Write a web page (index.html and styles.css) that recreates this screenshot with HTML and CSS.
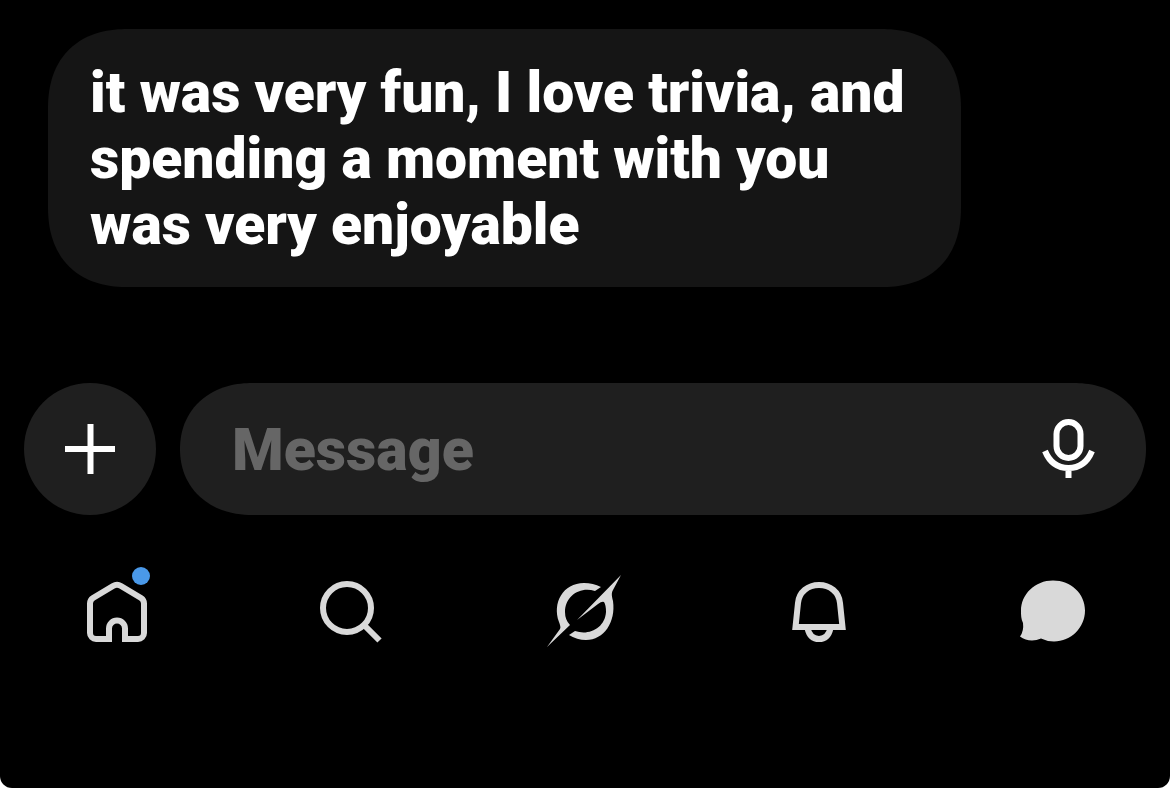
FILE: index.html
```html
<!DOCTYPE html>
<html lang="en">
<head>
<meta charset="utf-8">
<meta name="viewport" content="width=device-width, initial-scale=1">
<title>Messages</title>
<link rel="stylesheet" href="styles.css">
</head>
<body>
<div class="screen">
  <main class="thread">
    <p class="bubble">it was very fun, I love trivia, and spending a moment with you was very enjoyable</p>
  </main>
  <form class="composer">
    <button class="add" type="button" aria-label="Add attachment">
      <svg viewBox="0 0 52 52" width="52" height="52" fill="none" stroke="#fff" stroke-width="6"><path d="M26.500 1v50M1 26h50"/></svg>
    </button>
    <div class="field">
      <input class="field-input" type="text" placeholder="Message" aria-label="Message">
      <button class="mic" type="button" aria-label="Record voice message">
        <svg viewBox="0 0 60 64" width="60" height="64" fill="none" stroke="#fff" stroke-width="6"><rect x="18.500" y="5" width="24" height="36" rx="12"/><path d="M7 34C11.500 45 20 51 30.500 51S49.500 45 54 34M30.500 51v10"/></svg>
      </button>
    </div>
  </form>
  <nav class="tabs" aria-label="Main">
    <a class="tab" href="#home" aria-label="Home">
      <span class="icon">
        <svg viewBox="77 572 80 80" width="80" height="80" fill="none" stroke="#d9d9d9" stroke-width="6"><path d="M109 642V628.500a8 8 0 0 1 16 0V639H138a6 6 0 0 0 6-6V603.500Q144 600 141 598L121 586Q117 583.500 113 586L93 598Q90 600 90 603.500V633a6 6 0 0 0 6 6H112"/></svg>
        <span class="badge"></span>
      </span>
    </a>
    <a class="tab" href="#search" aria-label="Search">
      <svg viewBox="311 572 80 80" width="80" height="80" fill="none" stroke="#d9d9d9" stroke-width="6"><circle cx="347" cy="608" r="24"/><path d="M364 625l15.500 15.500"/></svg>
    </a>
    <a class="tab" href="#grok" aria-label="Grok">
      <svg viewBox="545 572 80 80" width="80" height="80" fill="#d9d9d9"><path d="M547 647L560 629C561 627 560 625 559 622C552 603 563 583 584 583Q593 583 601 587L595 591C580 586 565 596 565 612Q565 620 570 625ZM577 620L621 575L613 590C611 593 612 597 613 601C616 622 604 640 586 640Q577 640 569 635L575 631C589 636 605 628 606 612Q606 605 604 602Q602 601 598 604Z"/></svg>
    </a>
    <a class="tab" href="#notifications" aria-label="Notifications">
      <svg viewBox="779 572 80 80" width="80" height="80" fill="none" stroke="#d9d9d9" stroke-width="6"><path d="M795.500 627L798 603C799 592 808 585 819 585S839 592 840 603L842.500 627ZM807.500 628C809 635 813 639 819 639S829 635 830.500 628"/></svg>
    </a>
    <a class="tab" href="#messages" aria-label="Messages" aria-current="page">
      <svg viewBox="1013 572 80 80" width="80" height="80" fill="#d9d9d9"><path d="M1053 580.500C1071 580.500 1085 593.500 1085 610.500S1071 641.500 1054 641.500Q1047 641.500 1041 638.500C1034 641.500 1026 641 1020 636.500Q1024 631 1023 623C1021 619 1021 615 1021 611C1021 594 1035 580.500 1053 580.500Z"/></svg>
    </a>
  </nav>
</div>
</body>
</html>
```
FILE: styles.css
```css
* { box-sizing: border-box; }
body {
  margin: 0;
  background: #fff;
  font-family: Roboto, "Noto Sans", sans-serif;
  font-weight: 900;
}
.screen {
  display: flex;
  flex-direction: column;
  min-height: 100vh;
  background: #000;
  border-radius: 0 0 12px 12px;
}
.thread { padding: 29px 48px 0; }
.bubble {
  width: fit-content;
  max-width: 913px;
  margin: 0;
  padding: 31px 42px 29px;
  border-radius: 76px;
  background: #151515;
  color: #fff;
  font-size: 57px;
  line-height: 66px;
}
.composer {
  display: flex;
  gap: 24px;
  padding: 96px 24px 0;
}
button {
  display: grid;
  place-items: center;
  padding: 0;
  border: 0;
  background: none;
}
.add {
  flex: none;
  width: 132px;
  height: 132px;
  border-radius: 50%;
  background: #1f1f1f;
}
.field {
  flex: 1;
  min-width: 0;
  display: flex;
  align-items: center;
  padding: 0 48px 0 52px;
  border-radius: 66px;
  background: #1f1f1f;
}
@supports (corner-shape: superellipse(1.2)) {
  .bubble { border-radius: 80px; corner-shape: superellipse(1.2); }
  .field { border-radius: 72px / 66px; corner-shape: superellipse(1.1); }
}
.field-input {
  flex: 1;
  min-width: 0;
  padding: 0;
  border: 0;
  outline: 0;
  background: none;
  color: #fff;
  font: inherit;
  font-size: 59px;
}
.field-input::placeholder { color: #666; opacity: 1; }
.mic { width: 60px; height: 64px; }
.tabs {
  display: grid;
  grid-template-columns: repeat(5, 1fr);
  padding-top: 57px;
}
.tab { display: grid; place-items: center; }
svg { display: block; }
.icon { position: relative; }
.badge {
  position: absolute;
  top: -5px;
  right: 7px;
  width: 18px;
  height: 18px;
  border-radius: 50%;
  background: #4a99e9;
}
```
